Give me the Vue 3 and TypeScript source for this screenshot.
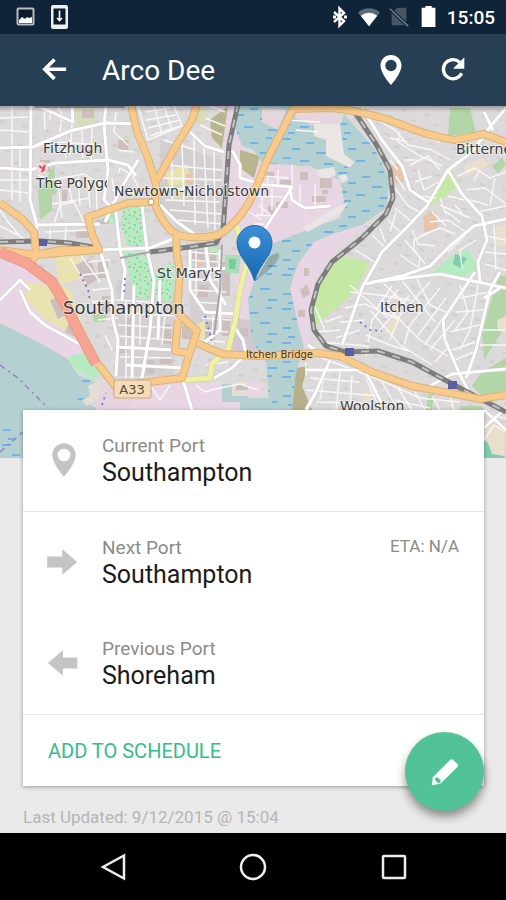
<script setup lang="ts">
interface Port {
  label: string
  value: string
  icon: string
  eta?: string
}

const ship = 'Arco Dee'
const pinPath =
  'M12 2C8.1 2 5 5.1 5 9c0 5.300 7 13 7 13s7-7.700 7-13c0-3.900-3.100-7-7-7zm0 10.800a3.800 3.800 0 1 1 0-7.600 3.800 3.800 0 0 1 0 7.600z'

const groups: Port[][] = [
  [{ label: 'Current Port', value: 'Southampton', icon: pinPath }],
  [
    { label: 'Next Port', value: 'Southampton', icon: 'M2 8.500h9.500V4l9.500 8-9.500 8v-4.500H2z', eta: 'ETA: N/A' },
    { label: 'Previous Port', value: 'Shoreham', icon: 'M21 8.500h-9V4l-9.500 8 9.500 8v-4.500h9z' },
  ],
]

const trunkRoads: string[] = [
  'M131 104 137 132 148 158 156 184 155 204Q164 228 178 235 196 240 218 235 240 222 253 195L268 158 293 109 330 108Q362 110 400 124 428 136 455 140L484 134 506 142',
  'M197 104 192 120 176 146 157 180',
  'M155 202 128 203 88 217 92 234 99 250',
  'M0 203 22 219 34 232 36 252',
  'M0 250 36 255 70 252 99 250 60 250 36 255 26 268',
  'M176 236 177 256 180 272 177 312 197 331 188 358 182 378 150 382 115 386 98 364',
  'M178 320 175 351 187 353',
  'M197 343 222 354 258 356 318 353 340 356 372 372 412 386 460 395 480 399 506 395',
]

const streets: string[] = [
  'M0 148 33 147 70 131 105 123 138 124', 'M31 106 30 200 37 225 100 224', 'M72 106 73 122 38 106',
  'M106 106 104 125 108 170 104 200 116 212 120 250', 'M138 160 120 190 105 222', 'M37 225 34 240',
  'M190 132 205 146 224 152', 'M160 205 177 222 200 238', 'M0 168 30 170 55 163 108 160 128 165 136 176',
  'M100 250 112 290 113 320 118 340 116 376', 'M142 205 147 250 154 280 150 330 142 378', 'M100 250 150 248 178 237',
  'M120 250 125 270 122 300', 'M116 347 174 350', 'M126 365 185 368', 'M134 285 132 378', 'M160 280 158 340',
  'M190 245 190 290 205 312 235 314', 'M205 240 210 280 226 305', 'M188 270 232 268', 'M220 250 220 330 205 342',
  'M233 325 243 340 246 354', 'M246 354 232 368 214 378', 'M30 290 20 280 0 300', 'M20 290 30 312 45 325 90 350 102 370',
  'M256 184 292 187 264 230', 'M290 188 292 200 305 208 330 206', 'M232 150 240 165 240 178 254 182',
  'M362 108 382 140 402 166 410 190 428 202', 'M506 108 490 127 472 152 448 170 427 206 410 224 382 252 362 288 342 345',
  'M448 170 462 194 482 216 487 240 478 262 480 282', 'M506 219 474 226 450 246 430 266 405 275 366 284',
  'M372 282 440 274 506 288', 'M475 272 443 320 445 340 460 375 468 390', 'M500 272 490 290 476 350 466 378',
  'M430 386 452 374 506 369', 'M308 345 318 352', 'M330 360 316 392 306 410', 'M305 370 365 370 385 410',
  'M484 428 506 408M484 410 506 430', 'M484 112 493 130', 'M180 370 192 410', 'M500 288 484 298',
]

const lanes: string[] = [
  'M0 118 28 117M0 130 30 132M0 190 30 193M0 180 29 180M12 106 12 200M20 148 20 202M50 106 50 120M44 106 45 130',
  'M57 106 62 114 60 132M72 124 70 156M82 130 83 158M92 128 91 160M38 145 62 142 100 145M64 145 66 158',
  'M38 175 50 180 84 174 104 186M58 184 62 218M68 182 72 200M78 178 80 206M88 178 90 208M96 180 97 210M52 204 90 198',
  'M54 224 60 205 74 202 84 222M0 210 8 222 20 236M0 226 24 238M45 232 90 230M50 240 50 228M65 240 66 226',
  'M138 106 148 140 182 126 174 106M145 112 170 108M146 120 176 115M148 128 180 120M150 136 180 126M154 106 162 134M164 106 172 130',
  'M116 112 114 132 128 145M118 150 134 152M118 174 120 168 132 175 140 190M112 190 126 194M112 178 116 200',
  'M165 165 222 170M162 178 222 180M165 188 222 190M172 150 172 200M182 142 184 206M194 138 195 225M204 148 208 228M214 152 215 230',
  'M165 200 220 202M170 210 222 214M178 220 222 224M164 140 195 150M200 125 222 135M205 118 225 126M210 106 225 112',
  'M70 258 86 284M80 254 100 282M88 262 110 260M82 275 110 272M92 290 112 288M92 302 115 300M98 320 118 318M105 335 112 350',
  'M116 300 150 302M116 312 175 316M118 325 172 328M118 336 172 340M126 300 126 378M140 302 140 345M165 316 162 345M120 357 172 358',
  'M188 252 218 254M188 260 218 262M192 280 218 280M192 290 226 292M195 302 226 304M196 250 196 300M202 318 230 320M205 330 228 332',
  'M198 340 225 342M212 345 213 315M205 365 228 362M210 390 240 384 258 390M196 385 205 392 220 388M150 385 160 400 170 385',
  'M262 176 288 178M256 196 282 197M262 186 262 215M272 182 272 210M300 185 300 208M315 185 315 206M285 120 320 122M296 130 318 132',
  'M256 215 275 216M255 224 264 224M268 190 268 176M290 113 290 124M246 210 262 220M258 205 270 214M292 165 292 188M278 170 278 186',
  'M374 118 395 130 408 145 432 150 450 160M370 110 405 128 440 142M400 132 398 142 420 156 442 166M407 142 390 138',
  'M410 165 428 156 440 170M418 170 424 190 438 182M415 182 432 176M404 160 418 160M420 196 436 198M398 170 390 160M405 190 396 176',
  'M395 188 408 206 420 212M395 208 412 222M388 220 402 234M372 235 388 250M355 250 375 262M396 212 390 232M380 228 385 242',
  'M458 176 475 168 490 178 506 172M466 190 485 188 506 204M470 200 488 205M478 212 506 206M495 178 490 206M480 170 474 180',
  'M412 230 418 244 435 246M405 240 420 258 418 270M420 236 440 228 455 234M430 222 448 220 466 232M444 210 460 222M440 205 470 218',
  'M425 264 414 250 414 240 430 232M455 205 462 214M440 198 446 214M432 212 446 226M448 196 464 200M400 255 422 270',
  'M350 292 380 295 410 300M345 308 365 304 400 320M340 322 365 320M336 338 360 330M350 285 388 318M382 282 406 305M400 278 435 322M392 286 376 310',
  'M416 277 430 305 446 312M430 282 400 315 390 340M440 288 410 325 404 345M446 298 416 338M448 310 425 345M455 320 430 350M450 345 435 362',
  'M398 290 372 320 368 342M410 295 380 330M370 310 400 345 432 365M380 300 420 340 448 356M366 335 390 345 412 352',
  'M460 285 468 312 455 330M478 285 470 330 460 350M490 292 460 298M484 310 456 312M480 325 450 332M475 342 452 350M455 360 474 352',
  'M485 236 506 240M485 252 506 254M485 264 506 270M494 225 496 270M476 240 460 250 462 268M465 236 448 252M506 330 482 330M506 345 480 345',
  'M325 322 342 316M315 332 340 330M320 342 368 346 366 356M312 300 325 330M322 358 380 380 420 398 460 402M325 370 320 400M340 372 336 410M352 375 350 410',
  'M310 378 360 382M306 390 380 396M316 402 385 404M365 375 380 410M382 382 398 410M398 388 412 410M415 392 425 410M432 396 440 410M450 398 454 410',
  'M306 362 306 376M395 400 430 408M487 415 506 418M484 440 494 425 506 432',
]

const buildings: string[] = [
  'M82 110h12v8H82zM118 140h10v10H118zM40 160h10v12H40zM84 150h9v5H84zM95 220h14v4H95zM62 190h5v12h-5zM76 230h20v8H76z',
  'M75 265l15-6 8 20-12 8zM50 300l12-5 8 18-12 6zM70 320l10 20-15-8zM98 260h10v18H98zM102 296h8v16h-8zM125 318h10v18h-10zM118 345h10v8h-10z',
  'M192 250h12v12h-12zM198 285h10v12h-10zM210 252h6v20h-6zM222 262h8v34h-8zM182 325h10v14h-10zM205 322h10v18h-10zM222 318h8v18h-8z',
  'M265 172h9v6h-9zM280 180h12v5h-12zM300 172h8v8h-8zM320 178h12v10h-12zM312 196h14v6h-14zM276 202h12v6h-12zM268 206h6v8h-6zM322 190h6v4h-6z',
  'M300 290l7-6 3 10-7 4zM298 310h7v7h-7zM304 268h5v8h-5zM160 358h12v6h-12zM146 360h8v14h-8zM163 324h8v20h-8zM236 385h12v5h-12zM240 328h8v8h-8z',
]

interface Label {
  text: string
  x: number
  y: number
  size: number
}

const labels: Label[] = [
  { text: 'Fitzhugh', x: 43, y: 153, size: 14 },
  { text: 'Newtown-Nicholstown', x: 114, y: 196, size: 14 },
  { text: "St Mary's", x: 157, y: 278, size: 14 },
  { text: 'Southampton', x: 63, y: 314, size: 18 },
  { text: 'Itchen', x: 380, y: 312, size: 14 },
  { text: 'Bitterne', x: 456, y: 154, size: 14 },
  { text: 'Woolston', x: 340, y: 411, size: 14 },
]
</script>

<template>
  <div class="screen">
    <div class="status">
      <div class="status-group notices">
        <svg class="status-icon" viewBox="0 0 24 24">
          <rect x="4.500" y="3.500" width="16" height="16" rx="1" fill="#0d1c2c" stroke="#b9bcc0" stroke-width="2" />
          <path d="M6 15l3-3 3 2 2-2 2 1 3-1v6H6z" fill="#fff" />
        </svg>
        <svg class="status-icon" viewBox="0 0 24 24">
          <rect x="4" y="0" width="17" height="24" rx="2" fill="#eee" />
          <path d="M6.500 3.500h12v16h-12z" fill="#0d1c2c" />
          <path d="M12.500 5.500v10M10 13l2.500 2.500L15 13" fill="none" stroke="#fff" stroke-width="1.600" />
        </svg>
      </div>
      <div class="status-group">
        <svg class="status-icon" viewBox="0 0 24 24">
          <path d="M7 7l10 9-4.500 4.500v-17L17 8 7 17" fill="none" stroke="#fff" stroke-width="2.400" />
          <path d="M6 10.500h3v3H6zM17 10.500h3v3h-3z" fill="#fff" />
        </svg>
        <svg class="status-icon wide" viewBox="0 0 24 24">
          <path d="M0 7Q12-2 24 7L12 22z" fill="#5c6b79" />
          <path d="M3 10.500Q12 4 21 10.500L12 22z" fill="#fff" />
        </svg>
        <svg class="status-icon wide" viewBox="0 0 24 24">
          <path d="M10 2h10v19H4V8z" fill="#465666" />
          <path d="M2 3l20 19" stroke="#0f2438" stroke-width="4" />
          <path d="M2 3l20 19" stroke="#697785" stroke-width="1.800" />
        </svg>
        <svg class="status-icon wide" viewBox="0 0 24 24">
          <path d="M8 0h7v2h4v21H4V2h4z" fill="#fff" />
        </svg>
        <span class="clock">15:05</span>
      </div>
    </div>

    <header class="app-bar">
      <button class="icon-button" type="button" aria-label="Back">
        <svg class="bar-icon" viewBox="0 0 24 24">
          <path d="M21 11H5M12 3.500L4.500 11l7.500 7.500" fill="none" stroke="#fff" stroke-width="2.800" />
        </svg>
      </button>
      <h1 class="title">{{ ship }}</h1>
      <button class="icon-button" type="button" aria-label="Locate">
        <svg class="pin-icon" viewBox="0 0 24 24"><path :d="pinPath" fill="#fff" /></svg>
      </button>
      <button class="icon-button" type="button" aria-label="Refresh">
        <svg class="refresh-icon" viewBox="0 0 24 24">
          <path d="M18.500 14.500A7.200 7.200 0 1 1 17 6.200" fill="none" stroke="#fff" stroke-width="2.500" />
          <path d="M20.500 2.500v8.500H12z" fill="#fff" />
        </svg>
      </button>
    </header>

    <main class="content">
      <svg class="map" viewBox="0 106 506 352" preserveAspectRatio="xMidYMin slice" role="img" aria-label="Map">
        <defs>
          <pattern id="tide" width="56" height="34" patternUnits="userSpaceOnUse">
            <path d="M2 3h9M26 7h8M42 2h6M12 13h8M36 17h10M3 22h8M20 25h9M44 28h9M8 31h7" stroke="#5aaaf0" stroke-width="1.300" />
          </pattern>
          <pattern id="scrub" width="11" height="13" patternUnits="userSpaceOnUse">
            <path d="M2 3l2 2M8 8l1-2M4 11h2" stroke="#5bb58a" stroke-width="1" />
            <path d="M7 2h2M1 8h2" stroke="#e79a8a" stroke-width="1" />
          </pattern>
          <pattern id="plots" width="23" height="19" patternUnits="userSpaceOnUse" patternTransform="rotate(12)">
            <path d="M2 3h5v3H2zM12 12h6v2h-6z" fill="#d4d0d0" />
            <path d="M15 3h1M3 13h1" stroke="#e3b3b3" />
          </pattern>
          <linearGradient id="marker" x1="0" y1="0" x2="0" y2="1">
            <stop offset="0" stop-color="#3c8fd3" />
            <stop offset="1" stop-color="#1568b3" />
          </linearGradient>
          <linearGradient id="barShade" x1="0" y1="0" x2="0" y2="1">
            <stop offset="0" stop-color="#000" stop-opacity=".28" />
            <stop offset="1" stop-color="#000" stop-opacity="0" />
          </linearGradient>
        </defs>

        <path d="M0 106h506v352H0z" fill="#dddadb" />
        <path d="M0 106h506v352H0z" fill="url(#plots)" />
        <path d="M160 140l62 20v70l-40 4-22-30zM116 280h58v96h-58zM186 242h36v92h-30z" fill="#cfcac9" opacity=".6" />

        <g class="land">
          <path d="M0 255 26 268 55 290 76 330 95 365 72 362 0 324zM248 166h40l52 8 8 24-10 24-44 20-40 44-12 50-8-60zM218 106h18l8 42 12 14-14 50-16 10zM290 266 316 236 366 224 332 256 318 276 311 300 309 345 298 346 285 300zM138 384 262 382 262 410 100 410 112 388z" fill="#e8d6e4" />
          <path d="M236 318l20 4 8 24-8 10-24-6z" fill="#d3c8d0" />
          <path d="M210 120l18-14-6 42-10-10zM240 150l20 6-6 22-14-10z" fill="#b9b58f" />
          <path d="M26 282 70 288 90 344 46 320 26 300zM165 172l22-8 4 18-22 4zM55 255l26 2 6 20-28 8zM192 326l14-6 4 16-12 4z" fill="#e8e3b0" />
          <path d="M92 222 118 212 118 224 98 224zM124 204 145 203 146 246 127 246 121 224zM124 252 146 252 153 278 148 300 134 296zM154 274 174 262 172 302 156 300zM70 356 88 352 100 375 92 380 70 365zM452 256 468 248 478 268 462 278 430 274zM210 248h9v12h-9z" fill="#b5ebc0" />
          <path d="M92 222 118 212 118 224 98 224zM124 204 145 203 146 246 127 246 121 224zM124 252 146 252 153 278 148 300 134 296zM154 274 174 262 172 302 156 300z" fill="url(#scrub)" />
          <path d="M342 256 370 262 355 292 315 326 311 308 323 276zM426 208 450 168 460 184 443 198z" fill="#c5e8a4" />
          <path d="M450 108h20l6 24-28 4zM40 190l14-26 2 30-16 2zM38 188h14v22l-12 10zM92 314h16l-4 8h-10zM498 276h8v50l-22 34-2-26zM472 386l10-14 24-14v34l-20 8zM460 406h20l6 4h-26zM492 166l10-8 4 6-8 10zM428 395l6-4-2 19h-6z" fill="#b3d6a8" />
          <path d="M484 440l22 18h-22zM455 254l12 4-6 10-8-4z" fill="#7fcdaa" />
          <path d="M480 420l24 8v28l-12-2zM464 166l20-8 4 8-22 10zM496 226h10v20h-10zM384 332l10-16 8-2-8 22zM364 392l6-4 2 12-10 2zM497 320l9-4v18l-8-4z" fill="#eadfca" />
          <path d="M423 216l12-5 4 16-14 6zM392 166l10-6 2 22-12 2zM195 250h9v16h-9zM186 174h8v10h-8z" fill="#e8c4aa" />
          <path d="M74 108h22v20H78zM118 138h12v12h-12zM166 186l20-4 8 14-20 6zM196 108h12v16h-12z" fill="#d9dcbc" />
          <path d="M296 368l12-2-6 20 10 24h-20z" fill="#b7b08a" />
        </g>

        <path class="water" d="M238 106 294 106 318 128 344 114 374 148 390 180 386 208 362 225 330 235 314 242 298 264 290 288 297 320 304 348 296 372 292 410 270 410 266 362 252 340 248 300 256 276 272 244 312 228 340 218 344 200 340 180 310 166 262 163 254 150 242 146 235 128z" />
        <path class="tide" d="M238 106 294 106 318 128 344 114 374 148 390 180 386 208 362 225 330 235 314 242 298 264 290 288 297 320 304 348 296 372 292 410 270 410 266 362 252 340 248 300 256 276 272 244 312 228 340 218 344 200 340 180 310 166 262 163 254 150 242 146 235 128z" />
        <path d="M293 108l52 0-4 16-22 4-24-10zM262 108l24 2-8 20-16-8z" fill="#e5d6dd" />
        <path d="M314 124l26 0 4 30 10 8-4 6-24-12v-16l-12-4zM316 170l18-3 2 8-10 4-8-4zM338 176l8-2 2 6-6 3zM302 228l36-22 10-3-6 9-34 20z" fill="#ebe6e4" />
        <path class="water" d="M0 323 38 342 68 359 78 375 98 383 86 402 100 410 138 410 138 458H0z" />
        <path class="water" d="M222 384h26v18h-26zM240 398h32v12h-32z" />
        <path d="M0 426h23v32H0zM76 374l20 8-8 24-10-6z" fill="url(#tide)" />
        <path d="M88 386l12-6 4 18-18 8-4-6 8-4zM232 382h16v14h-16z" fill="#e4dfd6" />
        <path d="M100 384l30 4v22h-34z" fill="#e5d3e0" />
        <path d="M0 365 18 378 34 394 48 408M0 452 23 432" fill="none" stroke="#9a80bf" stroke-width="1.500" stroke-dasharray="6 4 2 4" />

        <path v-for="(d, i) in buildings" :key="'b' + i" :d="d" fill="#cdbfbd" />
        <path v-for="(d, i) in lanes" :key="'l' + i" :d="d" class="road lane" />
        <path v-for="(d, i) in streets" :key="'sc' + i" :d="d" class="road street-edge" />
        <path v-for="(d, i) in streets" :key="'s' + i" :d="d" class="road street" />
        <path d="M225 255h16l-2 18h-14z" fill="#aadcb9" />
        <path d="M229 259h7l-1 10h-6z" fill="#7cc7a4" />

        <path class="road rail-siding" d="M222 245 220 290 214 335M150 252 120 258" />
        <path class="road rail" d="M238 104 229 145 226 190 223 230 216 243 190 247 150 252M0 242 40 241 70 243 98 248M352 108 376 144 390 170 393 198 386 214 362 238 332 262 318 284 311 310 314 330 326 346 345 352 378 351 412 362 445 380 475 396 506 412" />
        <path class="road rail-dash" d="M238 104 229 145 226 190 223 230 216 243 190 247 150 252M0 242 40 241 70 243 98 248M352 108 376 144 390 170 393 198 386 214 362 238 332 262 318 284 311 310 314 330 326 346 345 352 378 351 412 362 445 380 475 396 506 412" />

        <path class="road yellow-edge" d="M237 226 247 262 240 290 235 322 228 350 212 364 210 378 184 380" />
        <path class="road yellow" d="M237 226 247 262 240 290 235 322 228 350 212 364 210 378 184 380" />
        <path v-for="(d, i) in trunkRoads" :key="'tc' + i" :d="d" class="road trunk-edge" />
        <path v-for="(d, i) in trunkRoads" :key="'t' + i" :d="d" class="road trunk" />
        <path class="road motorway-edge" d="M0 252 28 264 52 282 66 306 80 334 96 364" />
        <path class="road motorway" d="M0 252 28 264 52 282 66 306 80 334 96 364" />

        <path d="M80 274 88 290 90 300M125 278 124 296M205 316 212 342M360 322 370 330 382 331M102 405l4-12" fill="none" stroke="#766fdc" stroke-width="1.800" stroke-dasharray="2 4" />
        <path d="M39 239h8v7h-8zM345 348h9v8h-9zM448 381h9v8h-9z" fill="#5a5fa0" />
        <circle cx="42" cy="168" r="6" fill="#f1dada" />
        <path d="M39 166l6 4M45 165l-3 7" stroke="#d3525c" stroke-width="2" />
        <circle cx="151" cy="202" r="3" fill="#fff" stroke="#c79a56" />

        <path d="M34 106h92l-2 2H36z" fill="#625f60" opacity=".5" />
        <g class="labels">
          <text v-for="label in labels" :key="label.text" :x="label.x" :y="label.y" :font-size="label.size">{{ label.text }}</text>
          <svg x="30" y="172" width="77" height="24"><text x="6" y="16" font-size="14">The Polygon</text></svg>
          <text class="bridge" x="246" y="358" font-size="10">Itchen Bridge</text>
        </g>
        <rect x="114" y="380" width="37" height="18" rx="2" fill="#f4dcba" stroke="#cda777" />
        <text class="shield" x="132" y="394" font-size="13" text-anchor="middle">A33</text>

        <path d="M255 281l14-24q12-8 10 0-2 8-24 24z" fill="#333" opacity=".25" />
        <path d="M254.500 281C250 264 237 256 237 243a17.500 17.500 0 0 1 35 0c0 13-13 21-17.500 38z" fill="url(#marker)" stroke="#2a6bab" />
        <circle cx="254.500" cy="242.500" r="6" fill="#fff" />
        <rect x="0" y="106" width="506" height="6" fill="url(#barShade)" />
      </svg>

      <section class="card">
        <div v-for="(group, g) in groups" :key="g" class="group">
          <div v-for="port in group" :key="port.label" class="port">
            <svg class="port-icon" :class="{ pin: port.icon === pinPath }" viewBox="0 0 24 24"><path :d="port.icon" fill="#c4c4c4" /></svg>
            <div class="port-text">
              <div class="port-label">{{ port.label }}</div>
              <div class="port-value">{{ port.value }}</div>
            </div>
            <div v-if="port.eta" class="eta">{{ port.eta }}</div>
          </div>
        </div>
        <button class="schedule" type="button">ADD TO SCHEDULE</button>
        <button class="fab" type="button" aria-label="Edit">
          <svg class="fab-icon" viewBox="0 0 32 32">
            <path d="M2 30l1-8.500L21.500 3q1.500-1 3 0l5 4.500q1 1.500 0 3L11 28.500z" fill="#fff" />
            <path d="M5.500 22.500l2.500-1 3.500 3.500-.500 2.500-2.500.500-3-3.500z" fill="#52c397" />
          </svg>
        </button>
      </section>
      <p class="updated">Last Updated: 9/12/2015 @ 15:04</p>
    </main>

    <nav class="nav-bar">
      <button class="nav-button" type="button" aria-label="System back">
        <svg class="nav-icon" viewBox="0 0 28 28"><path d="M25 2.500v23L4 14z" /></svg>
      </button>
      <button class="nav-button" type="button" aria-label="Home">
        <svg class="nav-icon" viewBox="0 0 28 28"><circle cx="14" cy="14" r="12" /></svg>
      </button>
      <button class="nav-button" type="button" aria-label="Overview">
        <svg class="nav-icon" viewBox="0 0 28 28"><rect x="4" y="3" width="22" height="22" rx="1" /></svg>
      </button>
    </nav>
  </div>
</template>

<style>
body {
  margin: 0;
  background: #eaeaea;
}
</style>

<style scoped>
.screen {
  display: flex;
  flex-direction: column;
  min-height: 100vh;
  background: #eaeaea;
  font-family: Roboto, "Liberation Sans", sans-serif;
}

button {
  border: 0;
  padding: 0;
  background: none;
  font: inherit;
  cursor: pointer;
}

svg {
  display: block;
}

.status {
  display: flex;
  align-items: center;
  justify-content: space-between;
  height: 34px;
  padding: 0 11px 0 13px;
  background: #0f2439;
}

.status-group {
  display: flex;
  align-items: center;
  gap: 6px;
}

.notices {
  gap: 10px;
}

.status-icon {
  width: 24px;
  height: 24px;
}

.status-icon.wide {
  height: 22px;
}

.clock {
  color: #fff;
  font-size: 19px;
  font-weight: 500;
}

.app-bar {
  display: flex;
  align-items: center;
  height: 72px;
  padding: 0 22px 0 23px;
  box-sizing: border-box;
  background: #263f55;
}

.icon-button {
  display: flex;
  align-items: center;
  justify-content: center;
  width: 62px;
  height: 64px;
}

.bar-icon {
  width: 31px;
  height: 31px;
}

.pin-icon {
  width: 36px;
  height: 36px;
}

.refresh-icon {
  width: 32px;
  height: 32px;
}

.title {
  flex: 1;
  margin: 0;
  padding-left: 17px;
  color: #fff;
  font-size: 28px;
  font-weight: 400;
}

.content {
  flex: 1;
}

.map {
  width: 100%;
  height: 352px;
}

.road {
  fill: none;
  stroke-linejoin: round;
}

.lane {
  stroke: #f9f8f8;
  stroke-width: 1.4px;
}

.street-edge {
  stroke: #cfcbcb;
  stroke-width: 4px;
}

.street {
  stroke: #fff;
  stroke-width: 3px;
}

.rail {
  stroke: #7d7d7d;
  stroke-width: 5px;
}

.rail-siding {
  stroke: #a9a5a8;
  stroke-width: 2px;
}

.rail-dash {
  stroke: #c2c2c2;
  stroke-width: 2px;
  stroke-dasharray: 8 8;
}

.yellow-edge {
  stroke: #cfcd98;
  stroke-width: 6px;
}

.yellow {
  stroke: #f0f0a2;
  stroke-width: 5px;
}

.trunk-edge {
  stroke: #dcb27a;
  stroke-width: 8px;
}

.trunk {
  stroke: #f8ca8b;
  stroke-width: 6px;
}

.motorway-edge {
  stroke: #e5998a;
  stroke-width: 11px;
}

.motorway {
  stroke: #f6a491;
  stroke-width: 9px;
}

.water {
  fill: #b4d0d0;
}

.tide {
  fill: url(#tide);
}

.labels text {
  fill: #3c3c3c;
  stroke: #fff;
  stroke-opacity: 0.5;
  stroke-width: 2px;
  paint-order: stroke;
  font-family: "DejaVu Sans", sans-serif;
}

.labels .bridge {
  fill: #4a3520;
  stroke: #f8ca8b;
}

.shield {
  fill: #5b4936;
  font-family: "DejaVu Sans", sans-serif;
}

.card {
  position: relative;
  margin: -48px 22px 0 23px;
  background: #fff;
  box-shadow: 0 1px 4px rgba(0, 0, 0, 0.35);
}

.group {
  border-bottom: 1px solid #e6e6e6;
}

.port {
  display: flex;
  align-items: center;
  height: 101px;
  padding: 0 25px 2px 21px;
  box-sizing: border-box;
}

.port-icon {
  width: 38px;
  height: 38px;
}

.port-icon.pin {
  width: 40px;
  height: 42px;
}

.port-text {
  flex: 1;
  padding-left: 20px;
}

.pin + .port-text {
  padding-left: 18px;
}

.port-label {
  color: #8b8b8b;
  font-size: 19px;
  line-height: 26px;
}

.port-value {
  color: #1b1b1b;
  font-size: 25px;
  line-height: 28px;
}

.eta {
  align-self: flex-start;
  padding-top: 23px;
  color: #8b8b8b;
  font-size: 17px;
  line-height: 22px;
}

.schedule {
  display: block;
  width: 100%;
  height: 71px;
  padding-left: 25px;
  color: #34bd89;
  font-size: 20px;
  text-align: left;
}

.fab {
  position: absolute;
  right: 0;
  bottom: -25px;
  display: flex;
  align-items: center;
  justify-content: center;
  width: 79px;
  height: 79px;
  border-radius: 50%;
  background: #52c397;
  box-shadow: 0 6px 10px rgba(0, 0, 0, 0.4);
}

.fab-icon {
  width: 30px;
  height: 30px;
}

.updated {
  margin: 20px 23px 0;
  color: #b5b5b5;
  font-size: 17px;
  line-height: 22px;
}

.nav-bar {
  display: flex;
  align-items: center;
  justify-content: center;
  gap: 80px;
  height: 67px;
  background: #000;
}

.nav-button {
  display: flex;
  align-items: center;
  justify-content: center;
  width: 60px;
  height: 60px;
}

.nav-icon {
  width: 28px;
  height: 28px;
  fill: none;
  stroke: #eee;
  stroke-width: 2.5px;
}
</style>
